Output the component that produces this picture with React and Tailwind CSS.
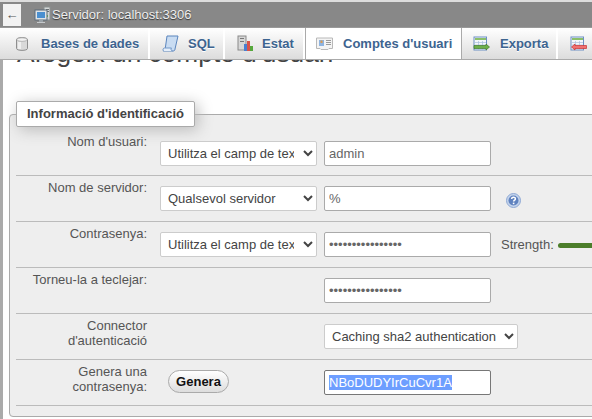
import React from 'react';

const ServerIcon = () => (
  <svg width="17" height="17" viewBox="0 0 17 17" className="shrink-0">
    <rect x="10" y="1" width="6" height="13" fill="#d5d8d8" stroke="#8a8f90" />
    <rect x="12" y="3" width="3" height="1" fill="#6b7072" />
    <rect x="12" y="5" width="3" height="1" fill="#6b7072" />
    <rect x="12" y="9" width="2" height="2" fill="#6fc24a" />
    <rect x="1" y="4" width="12" height="10" fill="#dfe3e6" stroke="#5d6b78" />
    <rect x="3" y="6" width="8" height="6" fill="#4a8fd0" />
    <rect x="5" y="14" width="4" height="2" fill="#9aa2a8" />
    <rect x="3" y="16" width="8" height="1" fill="#c5c9cc" />
  </svg>
);

const DbIcon = () => (
  <svg width="14" height="16" viewBox="0 0 14 16" className="shrink-0">
    <path d="M1.5 3.5C1.5 1 12.5 1 12.5 3.5V12.5C12.5 15 1.5 15 1.5 12.5Z" fill="#d9d9d9" stroke="#8e8e8e" />
    <ellipse cx="7" cy="3.6" rx="5" ry="1.8" fill="#f2f2f2" stroke="#a0a0a0" strokeWidth="0.7" />
    <rect x="3" y="6" width="3" height="7" fill="#efefef" />
  </svg>
);

const ScrollIcon = () => (
  <svg width="17" height="17" viewBox="0 0 17 17" className="shrink-0">
    <path d="M5 1H16L13 14C13 15.5 12 16 11 16H1.5C3 15 3 14 3.4 12.5Z" fill="#c9dcf2" stroke="#5b85bd" />
    <path d="M1.5 16C0.5 15 1 13 2.5 13H9.5C8.5 14 9 15.5 10.5 16" fill="#e4eefa" stroke="#5b85bd" strokeWidth="0.8" />
  </svg>
);

const StatsIcon = () => (
  <svg width="17" height="17" viewBox="0 0 17 17" className="shrink-0">
    <rect x="1" y="1" width="8" height="14" fill="#d7d7d7" stroke="#8a8a8a" />
    <rect x="3" y="3" width="4" height="1" fill="#777" />
    <rect x="3" y="6" width="4" height="1" fill="#777" />
    <rect x="7" y="9" width="3" height="7" fill="#4a7fd0" />
    <rect x="10" y="6" width="3" height="10" fill="#d9534a" />
    <rect x="13" y="11" width="3" height="5" fill="#56a83c" />
  </svg>
);

const UsersIcon = () => (
  <svg width="17" height="13" viewBox="0 0 17 13" className="shrink-0">
    <path d="M0.5 1H16.5V11.5H13L12 12.5H5L4 11.5H0.5Z" fill="#f4f4f4" stroke="#b8b8b8" />
    <rect x="3" y="3" width="5" height="6" fill="#8fb4e0" />
    <rect x="4.5" y="3.5" width="2" height="2.5" fill="#d99a50" />
    <rect x="10" y="3" width="5" height="1" fill="#9a9a9a" />
    <rect x="10" y="5" width="5" height="1" fill="#9a9a9a" />
    <rect x="10" y="7" width="5" height="1" fill="#9a9a9a" />
  </svg>
);

const TableArrowIcon = ({ arrow, line, dir }) => (
  <svg width="17" height="16" viewBox="0 0 17 16" className="shrink-0">
    <rect x="1" y="1" width="12.5" height="13" fill="#f4f7fb" stroke="#6d8fc4" />
    <rect x="2" y="2" width="11" height="2" fill="#8cc06a" />
    <path d="M2 6.5H13M2 9H13M2 11.5H13M5.5 5V14M9.5 5V14" stroke="#a9bfdc" strokeWidth="0.7" />
    {dir === 'right' ? (
      <path d="M1 9.5H13V8L16.5 11L13 14V12.5H1Z" fill={arrow} stroke={line} strokeWidth="0.7" />
    ) : (
      <path d="M16.5 9.5H5V8L1.5 11L5 14V12.5H16.5Z" fill={arrow} stroke={line} strokeWidth="0.7" />
    )}
  </svg>
);

const HelpIcon = () => (
  <svg width="15" height="15" viewBox="0 0 15 15" className="shrink-0">
    <circle cx="7.5" cy="7.5" r="7" fill="#c4d4ec" stroke="#8fa9d4" />
    <circle cx="7.5" cy="7.5" r="5" fill="#5f82bf" />
    <path d="M5.6 6C5.7 3.8 9.4 3.8 9.4 5.9C9.4 7.2 7.6 7.2 7.6 8.6" fill="none" stroke="#fff" strokeWidth="1.5" />
    <rect x="6.8" y="9.6" width="1.6" height="1.6" fill="#fff" />
  </svg>
);

const Tab = ({ icon, label, active, className }) => (
  <div
    className={`flex h-full shrink-0 items-center border-r-2 border-r-white ${
      active ? 'bg-white border-l border-l-[#aaa] -mb-px h-[33px]' : ''
    } ${className}`}
  >
    {icon}
    <span className="font-bold text-[#3d6490] [text-shadow:0_1px_0_#fff]">{label}</span>
  </div>
);

const Row = ({ label, children, first }) => (
  <div className={`flex border-b border-[#bbb] ${first ? 'h-[45px]' : 'h-[46px]'}`}>
    <div className={`w-[131px] shrink-0 text-right leading-[15px] text-[#555] ${first ? 'pt-[3px]' : 'pt-[4px]'}`}>{label}</div>
    <div className="flex min-w-0 flex-1 items-start pt-[10px]">{children}</div>
  </div>
);

const selectCls =
  'h-[25px] rounded-[2px] border border-[#ccc] bg-white pl-[3px] text-[13px] text-[#444] font-["Liberation_Sans",sans-serif]';
const inputCls =
  'h-[25px] w-[167px] rounded-[2px] border border-[#aaa] bg-white px-[4px] text-[13px] text-[#666] font-["Liberation_Sans",sans-serif] outline-none';

const UserSelect = () => (
  <select className={`${selectCls} ml-[13px] w-[157px] pr-[6px]`} defaultValue="text">
    <option value="text">Utilitza el camp de text</option>
  </select>
);

const App = () => {
  return (
    <div className="relative h-[419px] w-[592px] overflow-hidden bg-white font-['Liberation_Sans',sans-serif] text-[13px] text-[#444]">
      {/* Barra del servidor */}
      <div className="relative z-10 border-t-2 border-[#ddd] bg-[#888]">
        <div className="flex h-[25px] items-center">
          <div className="ml-[3px] flex h-[22px] w-[18px] items-center justify-center bg-[#f2f2f2] text-[13px] text-[#555]">
            ←
          </div>
          <div className="ml-[13px] flex items-center gap-[1px]">
            <ServerIcon />
            <span className="text-[#eee] [text-shadow:0_1px_1px_#333]">Servidor: localhost:3306</span>
          </div>
        </div>
      </div>

      {/* Pestanyes */}
      <div className="relative z-10 flex h-[33px] border-y border-[#aaa] bg-gradient-to-b from-white to-[#dcdcdc] border-t-[#999]">
        <Tab className="w-[150px] gap-[12px] pl-[15px]" icon={<DbIcon />} label="Bases de dades" />
        <Tab className="w-[75px] gap-[9px] pl-[12px]" icon={<ScrollIcon />} label="SQL" />
        <Tab className="w-[80px] gap-[8px] pl-[12px]" icon={<StatsIcon />} label="Estat" />
        <Tab className="w-[157px] gap-[10px] pl-[10px] !border-r-[#aaa] !border-r" active icon={<UsersIcon />} label="Comptes d'usuari" />
        <Tab className="w-[96px] gap-[10px] pl-[11px]" icon={<TableArrowIcon dir="right" arrow="#6db04a" line="#3f7a2a" />} label="Exporta" />
        <Tab className="w-[60px] gap-[10px] pl-[12px] border-r-0" icon={<TableArrowIcon dir="left" arrow="#f07070" line="#c93030" />} label="" />
      </div>

      {/* Contingut */}
      <div className="h-full w-[760px] border-l-[3px] border-[#aaa] pl-[6px]">
        <h2 className="-mt-[22px] ml-[8px] h-[63px] text-[26.3px] leading-[30px] text-[#444]">Afegeix un compte d'usuari</h2>

        <fieldset className="rounded-[4px] border border-[#aaa] bg-[#eee] px-[6px] pt-[4px] pb-[10px]">
          <legend className="ml-0 h-[26px] rounded-[2px] border border-[#aaa] bg-white px-[10px] text-[13px] font-bold leading-[24px] text-[#444] shadow-[3px_3px_15px_#bbb]">
            Informació d'identificació
          </legend>

          <Row first label="Nom d'usuari:">
            <UserSelect />
            <input readOnly value="admin" className={`${inputCls} ml-[7px]`} />
          </Row>

          <Row label="Nom de servidor:">
            <select className={`${selectCls} ml-[13px] w-[157px]`} defaultValue="any">
              <option value="any">Qualsevol servidor</option>
            </select>
            <input readOnly value="%" className={`${inputCls} ml-[7px]`} />
            <span className="ml-[15px] mt-[7px]">
              <HelpIcon />
            </span>
          </Row>

          <Row label="Contrasenya:">
            <UserSelect />
            <input readOnly type="password" value="abcdefghijklmnop" className={`${inputCls} ml-[7px]`} />
            <span className="ml-[10px] mt-[3px] text-[#555]">Strength:</span>
            <span className="ml-[4px] mt-[11px] h-[5px] w-[60px] rounded-[3px] bg-[#4b7d2a]" />
          </Row>

          <Row label="Torneu-la a teclejar:">
            <input readOnly type="password" value="abcdefghijklmnop" className={`${inputCls} ml-[177px]`} />
          </Row>

          <Row label={<>Connector<br />d'autenticació</>}>
            <select className={`${selectCls} ml-[177px] w-[194px]`} defaultValue="sha2">
              <option value="sha2">Caching sha2 authentication</option>
            </select>
          </Row>

          <Row label={<>Genera una<br />contrasenya:</>}>
            <button className="ml-[21px] h-[23px] w-[61px] rounded-full border border-[#aaa] bg-gradient-to-b from-white to-[#ddd] text-[13px] font-bold text-[#111]">
              Genera
            </button>
            <div className="ml-[95px] flex h-[25px] w-[167px] items-center rounded-[2px] border border-[#777] bg-white px-[4px] text-[13px]">
              <span className="bg-[#6d9eff] leading-[15px] text-white">NBoDUDYIrCuCvr1A</span>
            </div>
          </Row>
        </fieldset>
      </div>
    </div>
  );
};

export default App;
